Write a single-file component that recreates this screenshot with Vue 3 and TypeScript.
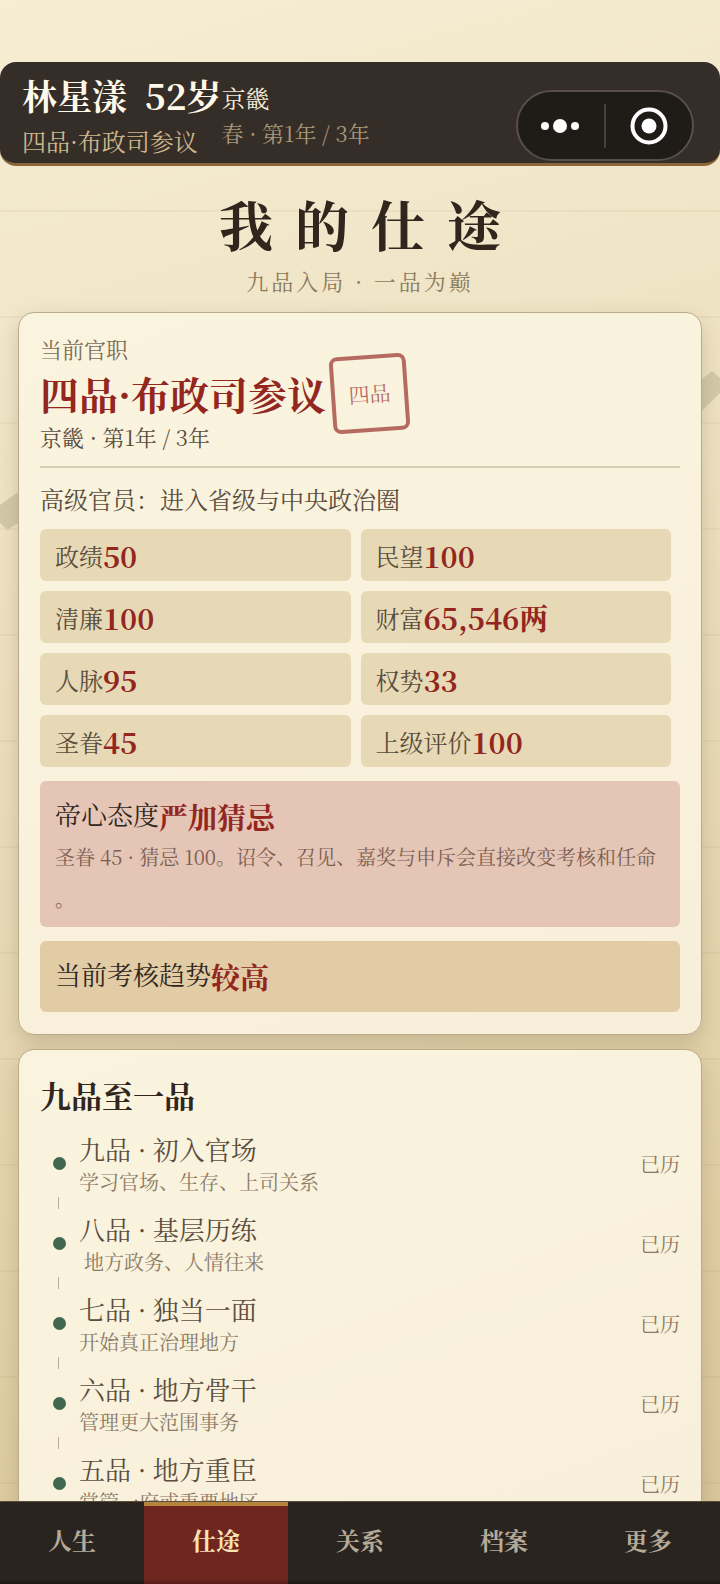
<script setup lang="ts">
interface Stat { label: string; value: string }
interface Rank { title: string; note: string; state: string }

const stats: Stat[] = [
  { label: '政绩', value: '50' },
  { label: '民望', value: '100' },
  { label: '清廉', value: '100' },
  { label: '财富', value: '65,546两' },
  { label: '人脉', value: '95' },
  { label: '权势', value: '33' },
  { label: '圣眷', value: '45' },
  { label: '上级评价', value: '100' },
]

const ranks: Rank[] = [
  { title: '九品 · 初入官场', note: '学习官场、生存、上司关系', state: '已历' },
  { title: '八品 · 基层历练', note: '\u00a0地方政务、人情往来', state: '已历' },
  { title: '七品 · 独当一面', note: '开始真正治理地方', state: '已历' },
  { title: '六品 · 地方骨干', note: '管理更大范围事务', state: '已历' },
  { title: '五品 · 地方重臣', note: '掌管一府或重要地区', state: '已历' },
]

const tabs: string[] = ['人生', '仕途', '关系', '档案', '更多']
const activeTab = '仕途'
</script>

<template>
  <div class="page">
    <svg class="scenery" viewBox="0 0 720 1584" preserveAspectRatio="none" aria-hidden="true">
      <path class="hill" d="M0 505 L18 492 V523 L7 530 L0 523 Z" />
      <path class="hill" d="M702 379 L712 371 L720 378 V393 L702 411 Z" />
    </svg>

    <header class="topbar">
      <div class="person">
        <div class="name"><span>林星漾</span><span>52岁</span></div>
        <div class="office">四品·布政司参议</div>
      </div>
      <div class="place">
        <div class="city">京畿</div>
        <div class="season">春 · 第1年 / 3年</div>
      </div>
      <div class="capsule">
        <button type="button" aria-label="更多操作">
          <svg width="40" height="40" viewBox="0 0 40 40">
            <circle cx="4" cy="20" r="4" /><circle cx="19" cy="20" r="7" /><circle cx="34" cy="20" r="4" />
          </svg>
        </button>
        <i class="split"></i>
        <button type="button" aria-label="关闭">
          <svg width="40" height="40" viewBox="0 0 40 40">
            <circle class="ring" cx="20" cy="20" r="16.5" /><circle cx="20" cy="20" r="7.5" />
          </svg>
        </button>
      </div>
    </header>

    <main>
      <div class="heading">
        <h1>我的仕途</h1>
        <p>九品入局 · 一品为巅</p>
      </div>

      <section class="card">
        <div class="current">
          <div>
            <div class="small">当前官职</div>
            <h2 class="post">四品·布政司参议</h2>
            <div class="small dark">京畿 · 第1年 / 3年</div>
          </div>
          <div class="stamp">四品</div>
        </div>
        <p class="summary">高级官员：进入省级与中央政治圈</p>
        <div class="stats">
          <div v-for="s in stats" :key="s.label" class="stat">
            <span>{{ s.label }}</span><strong>{{ s.value }}</strong>
          </div>
        </div>
        <div class="panel emperor">
          <div class="line"><span>帝心态度</span><strong>严加猜忌</strong></div>
          <p>圣眷 45 · 猜忌 100。诏令、召见、嘉奖与申斥会直接改变考核和任命。</p>
        </div>
        <div class="panel trend">
          <div class="line"><span>当前考核趋势</span><strong>较高</strong></div>
        </div>
      </section>

      <section class="card">
        <h2 class="section-title">九品至一品</h2>
        <ol class="ranks">
          <li v-for="r in ranks" :key="r.title">
            <i class="dot"></i>
            <div class="rank">
              <div class="rank-title">{{ r.title }}</div>
              <div class="rank-note">{{ r.note }}</div>
            </div>
            <span class="state">{{ r.state }}</span>
          </li>
        </ol>
      </section>
    </main>

    <nav class="tabs">
      <button v-for="t in tabs" :key="t" type="button" :class="{ active: t === activeTab }">{{ t }}</button>
    </nav>
  </div>
</template>

<style>
body {
  background: #f1e6c9;
}
</style>

<style scoped>
.page {
  position: relative;
  box-sizing: border-box;
  height: 100vh;
  padding-top: 62px;
  overflow: hidden;
  display: flex;
  flex-direction: column;
  font-family: 'Noto Serif CJK SC', 'Noto Serif SC', serif;
  color: #30261e;
  background:
    repeating-linear-gradient(180deg, transparent 0 104px, rgba(120, 95, 50, 0.06) 104px 106px),
    linear-gradient(165deg, #f6edd3 0%, #ecdfbe 40%, #e3d2aa 70%, #d8c498 100%);
}
h1, h2, p, ol {
  margin: 0;
  padding: 0;
}
button {
  font: inherit;
  color: inherit;
  border: 0;
  padding: 0;
  background: none;
}
.scenery {
  position: absolute;
  inset: 0;
  width: 100%;
  height: 100%;
}
.hill {
  fill: #d3c9aa;
}
.topbar {
  position: relative;
  box-sizing: border-box;
  flex: none;
  display: flex;
  height: 104px;
  padding: 8px 26px 0 22px;
  border-radius: 16px;
  border-bottom: 3px solid #8b6738;
  background: #352d28;
}
.name {
  display: flex;
  gap: 18px;
  font-size: 35px;
  line-height: 50px;
  font-weight: 700;
  color: #fff9e9;
}
.office {
  font-size: 24px;
  line-height: 42px;
  color: #cfb88a;
}
.city {
  margin-top: 11px;
  font-size: 24px;
  line-height: 34px;
  color: #f6ecd5;
}
.season {
  font-size: 22px;
  line-height: 36px;
  color: #a89878;
}
.capsule {
  box-sizing: border-box;
  display: flex;
  align-items: center;
  width: 178px;
  height: 71px;
  margin: 20px 0 0 auto;
  border: 2px solid #565049;
  border-radius: 36px;
  background: #1f1b17;
}
.capsule button {
  flex: 1;
  display: flex;
  justify-content: center;
}
.capsule svg {
  fill: #fff;
}
.capsule .ring {
  fill: none;
  stroke: #fff;
  stroke-width: 4;
}
.split {
  width: 2px;
  height: 44px;
  background: #44403b;
}
main {
  position: relative;
  flex: 1;
  min-height: 0;
  overflow: hidden;
  padding: 20px 18px 0;
}
.heading {
  text-align: center;
}
h1 {
  padding-left: 22px;
  font-size: 54px;
  line-height: 76px;
  font-weight: 700;
  letter-spacing: 22px;
}
.heading p {
  font-size: 22px;
  line-height: 38px;
  letter-spacing: 3px;
  color: #8b7a5c;
}
.card {
  margin: 12px 0 14px;
  padding: 21px 21px 22px;
  border: 1px solid #b9aa8b;
  border-radius: 16px;
  background: linear-gradient(160deg, #faf4df, #f8efda);
  box-shadow: 0 8px 20px rgba(80, 60, 30, 0.2);
}
.current {
  display: flex;
  align-items: center;
  margin-top: -2px;
  padding-bottom: 12px;
  border-bottom: 2px solid #d6cdb5;
}
.small {
  font-size: 22px;
  line-height: 34px;
  color: #7b6b55;
}
.small.dark {
  color: #5a4d3d;
}
.post {
  font-size: 39px;
  line-height: 54px;
  font-weight: 700;
  color: #93261f;
}
.stamp {
  box-sizing: border-box;
  width: 77px;
  height: 77px;
  margin-left: 5px;
  border: 4px solid #93261f;
  border-radius: 8px;
  font-size: 21px;
  line-height: 68px;
  text-align: center;
  color: #93261f;
  opacity: 0.66;
  transform: rotate(-4deg);
}
.summary {
  padding: 13px 0 12px;
  font-size: 24px;
  line-height: 36px;
  color: #5a4d3d;
}
.stats {
  display: grid;
  grid-template-columns: 1fr 1fr;
  gap: 10px;
  margin-right: 9px;
}
.stat {
  display: flex;
  align-items: center;
  height: 52px;
  padding-left: 15px;
  border-radius: 6px;
  background: #e7d9b5;
  font-size: 24px;
  color: #5a4d3d;
}
.stat strong {
  font-size: 29px;
}
strong {
  font-weight: 700;
  color: #93261f;
}
.panel {
  margin-top: 14px;
  padding: 14px 15px;
  border-radius: 6px;
}
.line {
  display: flex;
  align-items: flex-start;
  font-size: 26px;
  line-height: 38px;
}
.line strong {
  font-size: 29px;
  line-height: 43px;
}
.emperor {
  padding-bottom: 7px;
  background: #e5c5b6;
}
.emperor p {
  margin-top: -2px;
  font-size: 20px;
  line-height: 42px;
  line-break: anywhere;
  color: #7b5f52;
}
.trend {
  background: #e1cca5;
}
.section-title {
  font-size: 31px;
  line-height: 48px;
  font-weight: 700;
}
.ranks {
  padding-top: 4px;
  list-style: none;
}
.ranks li {
  position: relative;
  display: flex;
  align-items: center;
  height: 80px;
  padding-left: 13px;
}
.ranks li::after {
  content: '';
  position: absolute;
  left: 18px;
  bottom: -6px;
  width: 1px;
  height: 12px;
  background: #b9ae98;
}
.dot {
  width: 13px;
  height: 13px;
  border-radius: 50%;
  background: #41674f;
}
.rank {
  flex: 1;
  margin-left: 13px;
  padding-top: 2px;
}
.rank-title {
  font-size: 26px;
  line-height: 36px;
  color: #5a4d3d;
}
.rank-note {
  font-size: 20px;
  line-height: 30px;
  color: #8b7a66;
}
.state {
  font-size: 20px;
  color: #8b7a66;
}
.tabs {
  position: relative;
  box-sizing: border-box;
  flex: none;
  display: flex;
  height: 83px;
  border-top: 1px solid #5c4d36;
  background: linear-gradient(#29241f 0 77px, #1b1713 82px);
}
.tabs button {
  flex: 1;
  border-top: 4px solid transparent;
  padding-bottom: 12px;
  font-size: 24px;
  font-weight: 700;
  color: #b6aa98;
}
.tabs .active {
  border-top-color: #b5853f;
  background: linear-gradient(#6f2620 0 73px, #561a16 78px);
  color: #f9e3b5;
}
</style>
